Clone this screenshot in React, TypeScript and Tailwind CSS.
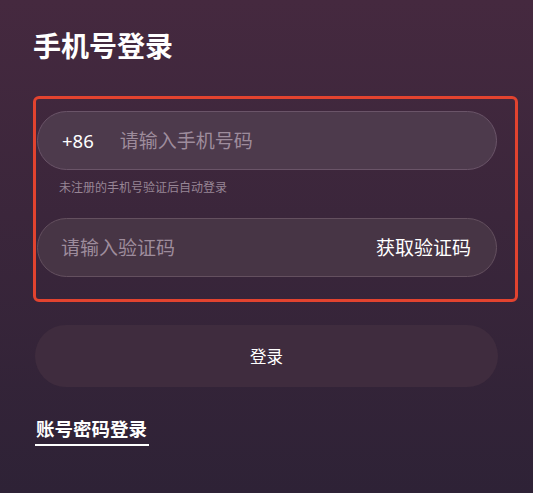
import React from "react";

export default function App() {
  const font = { fontFamily: '"Noto Sans CJK SC", "Noto Sans", sans-serif' };
  return (
    <div
      className="w-full h-[493px] bg-gradient-to-b from-[#45293f] to-[#2e2236] overflow-hidden"
      style={font}
    >
      <div className="pl-[33px] pt-[25px]">
        <h1 className="text-[28px] leading-[40px] font-bold text-white">手机号登录</h1>
      </div>
      <div className="ml-[33px] mt-[31px] w-[485px] h-[206px] border-[3px] border-[#e2432f] rounded-[6px] pl-[1px] pt-[12px]">
        <div className="w-[460px] h-[59px] rounded-full border border-[#6a5468] bg-[#4d3a4c] flex items-center pl-[24px]">
          <span className="text-white text-[18.5px]" style={{ fontFamily: '"Noto Sans", "Noto Sans CJK SC", sans-serif' }}>+86</span>
          <span className="ml-[26px] text-[#9e8c9c] text-[19px]">请输入手机号码</span>
        </div>
        <div className="mt-[8px] pl-[22px] text-[12px] leading-[18px] text-[#978595]">未注册的手机号验证后自动登录</div>
        <div className="mt-[22px] w-[460px] h-[59px] rounded-full border border-[#64505f] bg-[#473545] flex items-center justify-between pl-[23px] pr-[25px]">
          <span className="text-[#9e8c9c] text-[19px]">请输入验证码</span>
          <span className="text-white text-[19px]">获取验证码</span>
        </div>
      </div>
      <div className="ml-[35px] mt-[23px] w-[463px] h-[62px] rounded-full bg-[#3f2c3e] flex items-center justify-center">
        <span className="text-white text-[16.5px]">登录</span>
      </div>
      <div className="ml-[35px] mt-[28px] inline-block">
        <div className="text-white text-[18.5px] font-bold leading-[26px] pl-[1px]">账号密码登录</div>
        <div className="mt-[3px] h-[1.5px] w-[114px] bg-white"></div>
      </div>
    </div>
  );
}
